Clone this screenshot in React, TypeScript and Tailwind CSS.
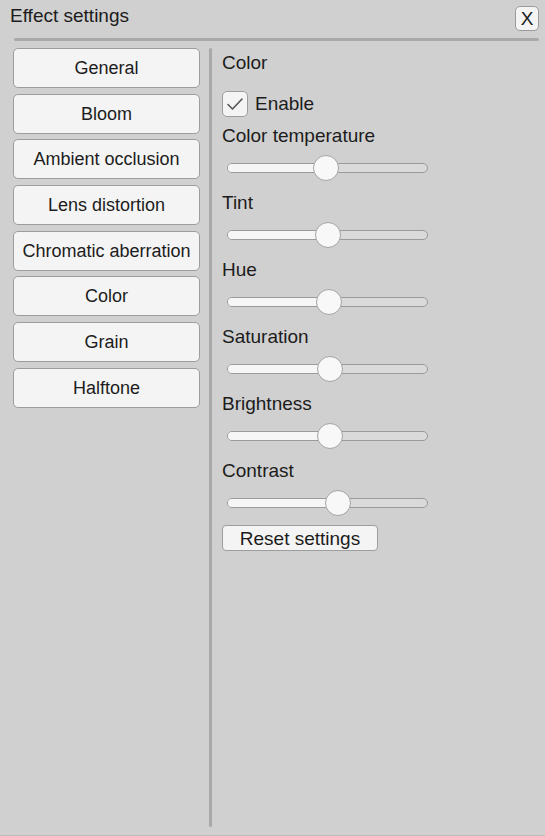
import React from 'react';

// --- DATA ---
const effects = [
  'General',
  'Bloom',
  'Ambient occlusion',
  'Lens distortion',
  'Chromatic aberration',
  'Color',
  'Grain',
  'Halftone',
];

// offset of the thumb centre from the left end of the track, in px
const sliders = [
  { label: 'Color temperature', pos: 98 },
  { label: 'Tint', pos: 100 },
  { label: 'Hue', pos: 101 },
  { label: 'Saturation', pos: 102 },
  { label: 'Brightness', pos: 102 },
  { label: 'Contrast', pos: 110 },
];

function Slider({ pos }: { pos: number }) {
  return (
    <div className="h-[38px] flex items-center pl-[5px]">
      <div className="relative w-[201px] h-[10px] rounded-full border border-[#9a9a9a] bg-[#dadada]">
        <div
          className="absolute left-0 top-0 bottom-0 rounded-full bg-[#f6f6f6]"
          style={{ width: pos }}
        />
        <div
          className="absolute top-1/2 -translate-y-1/2 w-[26px] h-[26px] rounded-full border border-[#a4a4a4] bg-[#f8f8f8]"
          style={{ left: pos - 13 }}
        />
      </div>
    </div>
  );
}

export default function App() {
  return (
    <div className="w-[545px] h-[836px] bg-[#d0d0d0] flex flex-col border-b border-[#bdbdbd] text-[#1c1c1c] font-['Liberation_Sans',Arial,sans-serif] overflow-hidden">
      {/* title bar */}
      <div className="h-[34px] flex items-center justify-between pl-[10px] pr-[6px]">
        <span className="text-[19px] leading-none -mt-[3px]">Effect settings</span>
        <button className="w-[24px] h-[25px] mt-[2px] rounded-[5px] border border-[#9a9a9a] bg-[#f4f4f4] text-[19px] leading-none flex items-center justify-center">
          X
        </button>
      </div>
      <div className="mx-[14px] mr-[6px] mt-[4px] h-[3px] rounded-full bg-[#a9a9a9]" />

      <div className="flex flex-1 pt-[7px] pb-[8px]">
        {/* effect list */}
        <div className="pl-[13px] w-[187px] box-content flex flex-col gap-[5.7px]">
          {effects.map((name) => (
            <button
              key={name}
              className="h-[40px] w-full rounded-[5px] border border-[#9d9d9d] bg-[#f4f4f4] text-[18px] leading-none"
            >
              {name}
            </button>
          ))}
        </div>

        <div className="ml-[9px] w-[3px] bg-[#a9a9a9] rounded-full" />

        {/* settings */}
        <div className="pl-[10px] flex flex-col">
          <div className="h-[30px] flex items-center text-[19px]">Color</div>
          <div className="mt-[13px] h-[26px] flex items-center gap-[7px]">
            <div className="w-[26px] h-[26px] rounded-[5px] border border-[#9d9d9d] bg-[#f4f4f4] flex items-center justify-center">
              <svg width="18" height="14" viewBox="0 0 18 14" fill="none">
                <path d="M2 7.5 L6.5 12 L16 2" stroke="#555" strokeWidth="1.6" strokeLinecap="round" strokeLinejoin="round" />
              </svg>
            </div>
            <span className="text-[19px]">Enable</span>
          </div>
          <div className="mt-[6px] flex flex-col gap-[3px]">
            {sliders.map((s) => (
              <div key={s.label}>
                <div className="h-[26px] flex items-center text-[19px]">{s.label}</div>
                <Slider pos={s.pos} />
              </div>
            ))}
          </div>
          <button className="mt-[3px] w-[156px] h-[26px] rounded-[4px] border border-[#9d9d9d] bg-[#f4f4f4] text-[19px] leading-none">
            Reset settings
          </button>
        </div>
      </div>
    </div>
  );
}
